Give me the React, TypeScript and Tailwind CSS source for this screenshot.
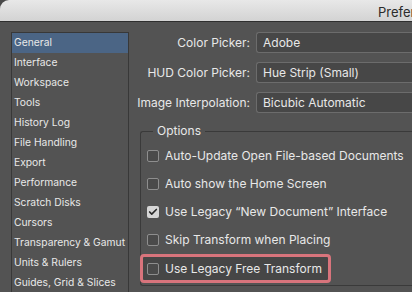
import { Check } from 'lucide-react'

const NAV = [
  'General',
  'Interface',
  'Workspace',
  'Tools',
  'History Log',
  'File Handling',
  'Export',
  'Performance',
  'Scratch Disks',
  'Cursors',
  'Transparency & Gamut',
  'Units & Rulers',
  'Guides, Grid & Slices',
]

const PICKERS = [
  { label: 'Color Picker:', value: 'Adobe' },
  { label: 'HUD Color Picker:', value: 'Hue Strip (Small)' },
  { label: 'Image Interpolation:', value: 'Bicubic Automatic' },
]

const OPTIONS = [
  { label: 'Auto-Update Open File-based Documents', checked: false },
  { label: 'Auto show the Home Screen', checked: false },
  { label: 'Use Legacy “New Document” Interface', checked: true },
  { label: 'Skip Transform when Placing', checked: false },
]

function Box({ checked }: { checked: boolean }) {
  return checked ? (
    <span className="w-[12px] h-[12px] rounded-[2px] bg-[#d6d6d6] flex items-center justify-center flex-shrink-0">
      <Check className="w-[10px] h-[10px] text-[#2a2a2a]" strokeWidth={4} />
    </span>
  ) : (
    <span className="w-[12px] h-[12px] rounded-[2px] border border-[#8e8e8e] bg-[#4a4a4a] flex-shrink-0" />
  )
}

export default function App() {
  return (
    <div className="w-[412px] h-[292px] overflow-hidden bg-[#4a4a4a] font-['Inter','Liberation_Sans',sans-serif] text-[12px] text-[#e8e8e8]">
      <div className="w-full h-full bg-[#535353] rounded-tl-[9px] overflow-hidden flex flex-col">
        {/* Title bar */}
        <div className="h-[22px] flex-shrink-0 bg-gradient-to-b from-[#e8e8e8] to-[#d3d3d3] border-b border-[#2e2e2e] flex items-center pt-[5px]">
          <span className="ml-[378px] whitespace-nowrap text-[13px] text-[#2b2b2b]">Preferences</span>
        </div>

        <div className="flex flex-1">
          {/* Sidebar */}
          <ul className="ml-[11px] mt-[10px] w-[118px] border border-[#383838] border-b-0 flex-shrink-0 text-[10.3px]">
            {NAV.map((item, i) => (
              <li
                key={item}
                className={`h-[20px] pl-[2px] flex items-center whitespace-nowrap ${
                  i === 0 ? 'bg-[#4b6585]' : ''
                }`}
              >
                {item}
              </li>
            ))}
          </ul>

          {/* Main */}
          <div className="flex-1 flex flex-col">
            <div className="mt-[10px] flex flex-col gap-[9px]">
              {PICKERS.map((p) => (
                <div key={p.label} className="flex items-center h-[21px]">
                  <span className="w-[127px] text-right whitespace-nowrap pr-[6px] flex-shrink-0">{p.label}</span>
                  <div className="flex-1 h-[21px] rounded-l-[3px] border border-r-0 border-[#6c6c6c] bg-[#474747] flex items-center pl-[6px] whitespace-nowrap">
                    {p.value}
                  </div>
                </div>
              ))}
            </div>

            {/* Options group */}
            <div className="relative ml-[11px] mt-[18px] h-[155px] border border-r-0 border-[#3a3a3a] rounded-l-[3px]">
              <span className="absolute -top-[9px] left-[12px] px-[4px] bg-[#535353] leading-[16px]">Options</span>
              <div className="flex flex-col pt-[10px]">
                {OPTIONS.map((o) => (
                  <div key={o.label} className="h-[28px] flex items-center gap-[6px] pl-[6px] whitespace-nowrap">
                    <Box checked={o.checked} />
                    <span>{o.label}</span>
                  </div>
                ))}
                <div className="-ml-[1px] w-[191px] h-[29px] rounded-[4px] border-[3px] border-[#d8747c] bg-[#464646] flex items-center gap-[6px] pl-[4px] whitespace-nowrap">
                  <Box checked={false} />
                  <span>Use Legacy Free Transform</span>
                </div>
              </div>
            </div>
          </div>
        </div>
      </div>
    </div>
  )
}
